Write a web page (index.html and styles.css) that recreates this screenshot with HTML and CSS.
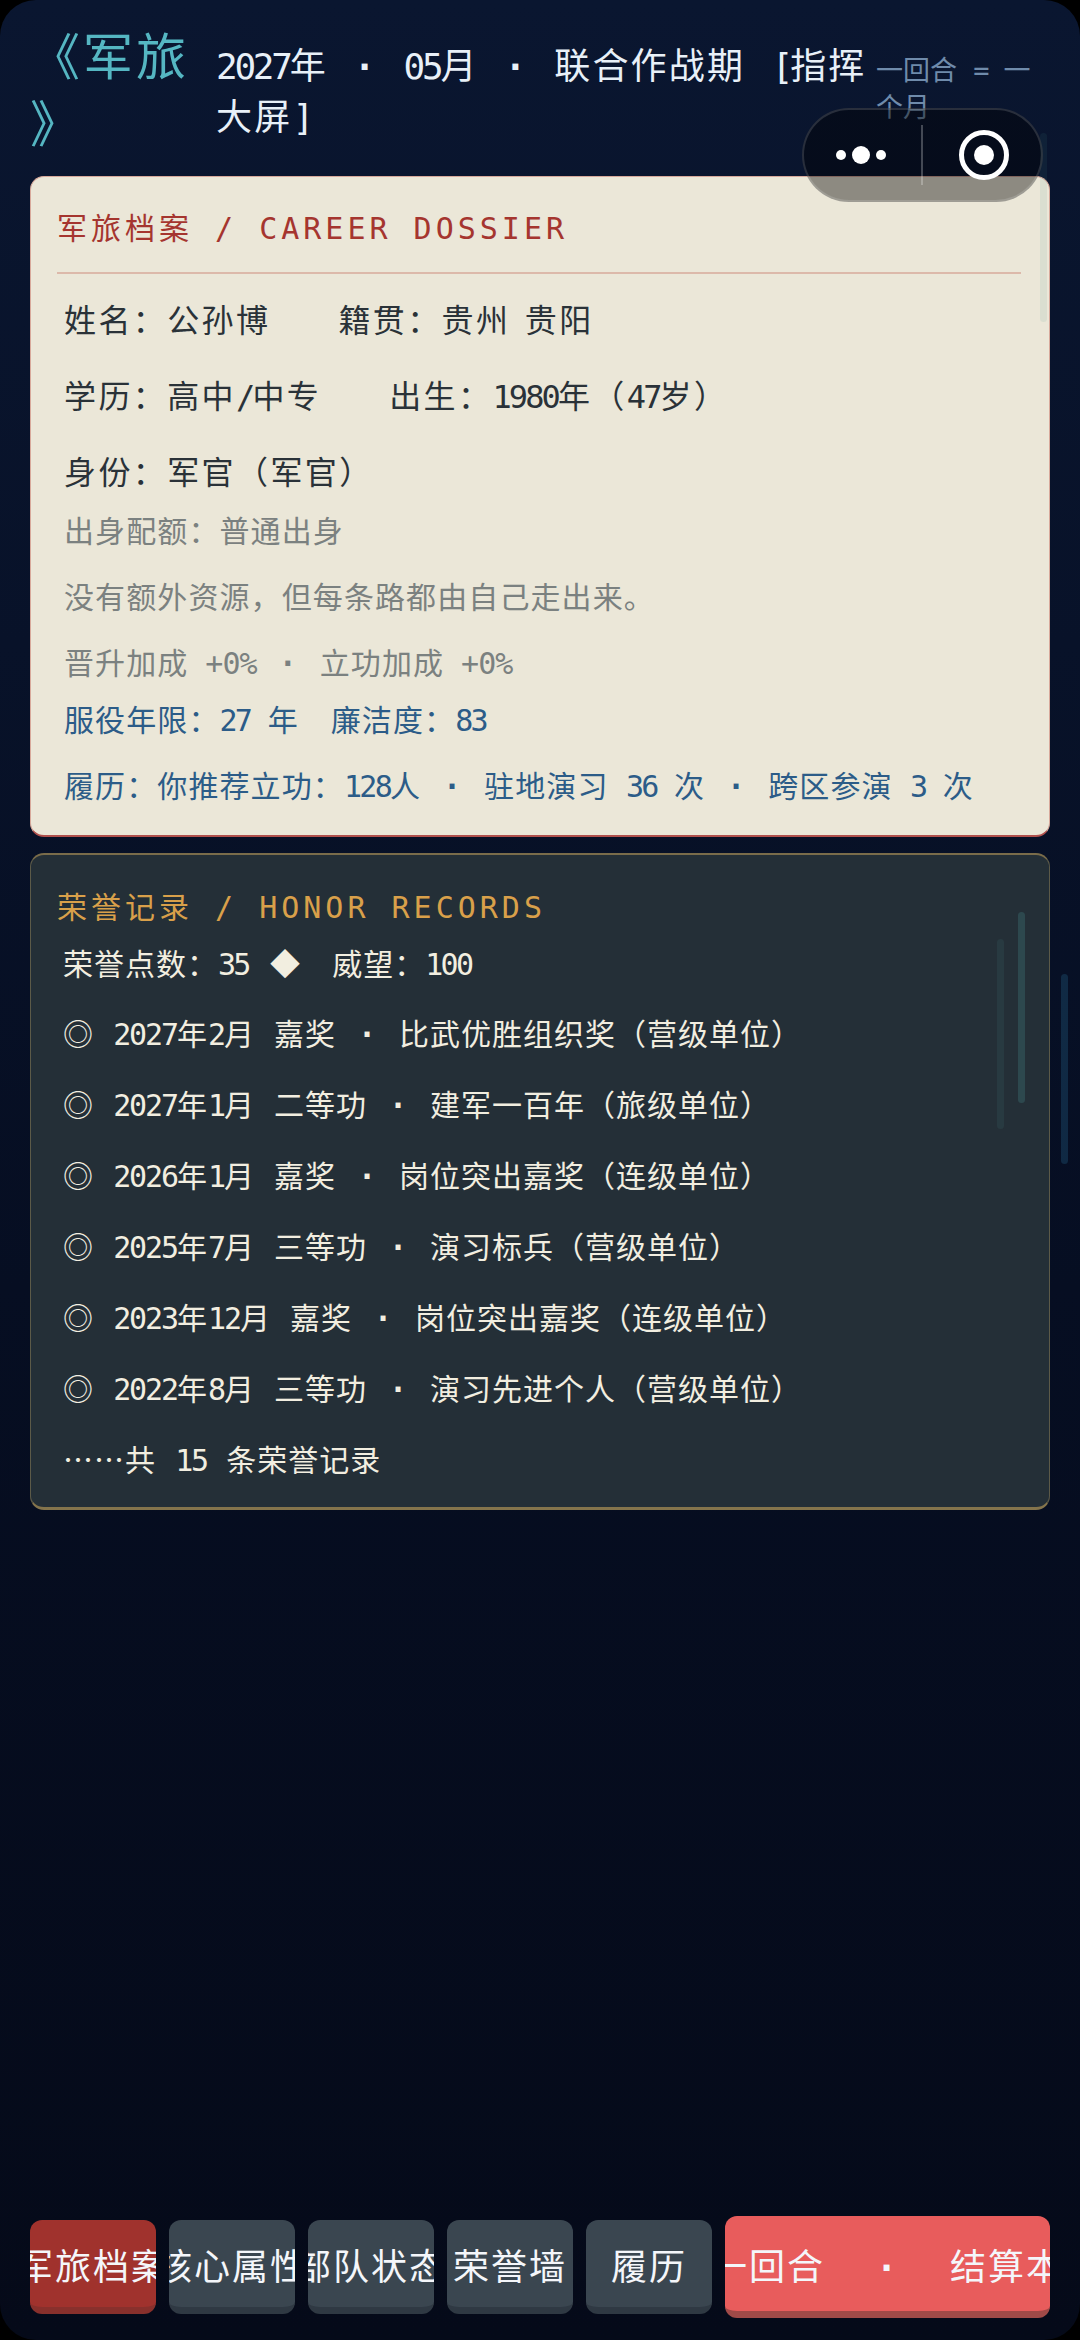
FILE: index.html
```html
<!DOCTYPE html>
<html lang="zh-CN">
<head>
  <meta charset="UTF-8">
  <title>军旅</title>
  <link rel="stylesheet" href="styles.css">
</head>
<body>
  <div class="page">
    <header class="topbar">
      <div class="game-title">《军旅<br>》</div>
      <div class="game-date"><span class="num">2027</span>年<span class="dot">·</span><span class="num">05</span>月<span class="dot">·</span>联合作战期 <span class="num">[</span>指挥大屏<span class="num">]</span></div>
      <div class="game-hint">一回合 <span class="num">=</span> 一个月</div>
    </header>

    <section class="card card-paper">
      <h2 class="card-title title-red">军旅档案 / CAREER DOSSIER</h2>
      <div class="paper-body">
        <div class="info-group">
          <div class="info-row"><span>姓名：公孙博</span><span>籍贯：贵州 贵阳</span></div>
          <div class="info-row"><span>学历：高中<span class="num">/</span>中专</span><span>出生：<span class="num">1980</span>年（<span class="num">47</span>岁）</span></div>
          <div class="info-row"><span>身份：军官（军官）</span></div>
        </div>
        <div class="note-group">
          <div>出身配额：普通出身</div>
          <div>没有额外资源，但每条路都由自己走出来。</div>
          <div>晋升加成 <span class="num">+0%</span><span class="dot">·</span>立功加成 <span class="num">+0%</span></div>
        </div>
        <div class="blue-group">
          <div class="blue-row"><span>服役年限：<span class="num">27</span> 年</span><span>廉洁度：<span class="num">83</span></span></div>
          <div>履历：你推荐立功：<span class="num">128</span>人<span class="dot">·</span>驻地演习 <span class="num">36</span> 次<span class="dot">·</span>跨区参演 <span class="num">3</span> 次</div>
        </div>
      </div>
    </section>

    <section class="card card-dark">
      <h2 class="card-title title-gold">荣誉记录 / HONOR RECORDS</h2>
      <div class="honor-stats">荣誉点数：<span class="num">35</span> ◆ <span class="stat-gap">威望：<span class="num">100</span></span></div>
      <ul class="honor-list">
        <li>◎ <span class="num">2027</span>年<span class="num">2</span>月 嘉奖<span class="dot">·</span>比武优胜组织奖（营级单位）</li>
        <li>◎ <span class="num">2027</span>年<span class="num">1</span>月 二等功<span class="dot">·</span>建军一百年（旅级单位）</li>
        <li>◎ <span class="num">2026</span>年<span class="num">1</span>月 嘉奖<span class="dot">·</span>岗位突出嘉奖（连级单位）</li>
        <li>◎ <span class="num">2025</span>年<span class="num">7</span>月 三等功<span class="dot">·</span>演习标兵（营级单位）</li>
        <li>◎ <span class="num">2023</span>年<span class="num">12</span>月 嘉奖<span class="dot">·</span>岗位突出嘉奖（连级单位）</li>
        <li>◎ <span class="num">2022</span>年<span class="num">8</span>月 三等功<span class="dot">·</span>演习先进个人（营级单位）</li>
        <li>……共 <span class="num">15</span> 条荣誉记录</li>
      </ul>
    </section>

    <nav class="tabbar">
      <div class="tab tab-active"><span>军旅档案</span></div>
      <div class="tab"><span>核心属性</span></div>
      <div class="tab"><span>部队状态</span></div>
      <div class="tab"><span>荣誉墙</span></div>
      <div class="tab"><span>履历</span></div>
      <div class="tab tab-next"><span>下一回合<span class="next-dot">·</span>结算本月</span></div>
    </nav>

    <!-- ghost scroll bars left over on the page -->
    <i class="ghost-bar bar-a"></i>
    <i class="ghost-bar bar-b"></i>
    <i class="ghost-bar bar-c"></i>
    <i class="ghost-bar bar-d"></i>

    <!-- mini program capsule -->
    <div class="capsule">
      <svg class="capsule-dots" width="80" height="24" viewBox="0 0 80 24">
        <circle cx="10" cy="12" r="5" fill="#fff"/>
        <circle cx="30" cy="12" r="9" fill="#fff"/>
        <circle cx="50" cy="12" r="5" fill="#fff"/>
      </svg>
      <span class="capsule-line"></span>
      <svg class="capsule-ring" width="52" height="52" viewBox="0 0 52 52">
        <circle cx="26" cy="26" r="22.5" fill="none" stroke="#fff" stroke-width="5"/>
        <circle cx="26" cy="26" r="10" fill="#fff"/>
      </svg>
    </div>
  </div>
</body>
</html>
```

FILE: styles.css
```css
* {
  box-sizing: border-box;
}

body {
  margin: 0;
  background: #000;
  font-family: "Noto Sans CJK SC", sans-serif;
}

.page {
  position: relative;
  display: flex;
  flex-direction: column;
  width: 1080px;
  height: 2340px;
  padding: 0 30px 22px;
  border-radius: 36px;
  overflow: hidden;
  background: linear-gradient(180deg, #0a1630 0%, #060e22 55%, #050a19 100%);
  word-spacing: 0.3em;
}

/* latin and digits are narrow and tight in this ui */
.num {
  font-family: "DejaVu Sans Mono", monospace;
  line-height: 1;
  letter-spacing: -0.09em;
}

.dot {
  display: inline-block;
  width: 2.1em;
  text-align: center;
  font-family: "DejaVu Sans Mono", monospace;
  font-weight: bold;
  line-height: 1;
}

/* top bar */
.topbar {
  display: flex;
  align-items: center;
  gap: 16px;
  height: 176px;
  padding-bottom: 2px;
}

.game-title {
  flex: 0 0 170px;
  font-size: 50px;
  line-height: 67px;
  letter-spacing: 3px;
  color: #55b6c2;
}

.game-date {
  flex: 0 0 662px;
  height: 106px;
  padding-top: 4px;
  font-size: 36px;
  line-height: 51px;
  letter-spacing: 2.2px;
  word-spacing: 0.45em;
  color: #e8f0f8;
}

.game-hint {
  flex: 0 0 165px;
  margin-left: -18px;
  font-size: 27px;
  line-height: 37px;
  word-spacing: 0.38em;
  color: #6f8bab;
}

/* cards */
.card {
  border-radius: 14px;
  margin-bottom: 16px;
}

.card-paper {
  height: 661px;
  padding: 32px 28px 0;
  background: #ebe7d8;
  border: 1px solid #d8a99b;
  border-bottom: 2px solid #b0504c;
}

.card-dark {
  height: 657px;
  padding: 33px 28px 0;
  background: #242f37;
  border: 1px solid #5c5a48;
  border-top: 2px solid #7a6c4a;
  border-bottom: 3px solid #84744c;
}

.card-title {
  margin: 0 0 0 -2px;
  font-size: 30px;
  font-weight: normal;
  line-height: 40px;
  letter-spacing: 4px;
  word-spacing: 0;
  font-family: "DejaVu Sans Mono", "Noto Sans CJK SC", monospace;
}

.title-red {
  padding-bottom: 23px;
  border-bottom: 2px solid #dcb9aa;
  color: #a5352f;
}

.title-gold {
  color: #d9a04a;
}

.paper-body {
  display: flex;
  flex-direction: column;
  gap: 20px;
  padding: 24px 0 0 5px;
}

.info-group {
  display: flex;
  flex-direction: column;
  gap: 36px;
  font-size: 32px;
  line-height: 40px;
  letter-spacing: 2.4px;
  color: #2a3238;
}

.info-row,
.blue-row {
  display: flex;
  gap: 68px;
  height: 40px;
}

.blue-row {
  gap: 32px;
  height: 36px;
}

.note-group {
  display: flex;
  flex-direction: column;
  gap: 30px;
  margin-top: 1px;
  font-size: 30px;
  line-height: 36px;
  letter-spacing: 1.1px;
  word-spacing: 0.3em;
  color: #7b8180;
}

.note-group .num {
  letter-spacing: -0.03em;
}

.note-group div,
.blue-group div {
  height: 36px;
}

.blue-group {
  display: flex;
  flex-direction: column;
  gap: 30px;
  margin-top: 1px;
  font-size: 30px;
  line-height: 36px;
  letter-spacing: 1.1px;
  word-spacing: 0.32em;
  color: #2c5c88;
}

.honor-stats {
  height: 36px;
  margin-top: 16px;
  padding-left: 4px;
  font-size: 30px;
  line-height: 36px;
  letter-spacing: 1px;
  word-spacing: 0.45em;
  color: #f2eee0;
}

.stat-gap {
  margin-left: 10px;
}

.honor-list {
  list-style: none;
  display: flex;
  flex-direction: column;
  gap: 35px;
  margin: 34px 0 0;
  padding: 0 0 0 4px;
  font-size: 30px;
  line-height: 36px;
  letter-spacing: 1px;
  word-spacing: 0.38em;
  color: #f2eee0;
}

.honor-list .num {
  letter-spacing: -0.07em;
}

.honor-list li {
  height: 36px;
}

/* bottom tabs */
.tabbar {
  display: flex;
  align-items: center;
  gap: 13px;
  margin-top: auto;
  word-spacing: 0;
}

.tab {
  display: flex;
  flex: 0 0 126px;
  align-items: center;
  justify-content: center;
  height: 94px;
  overflow: hidden;
  border-radius: 12px;
  background: #3a4650;
  border-bottom: 7px solid #2f3943;
  color: #f4f6fa;
  font-size: 36px;
  letter-spacing: 2px;
  white-space: nowrap;
}

.tab span {
  flex-shrink: 0;
}

.tab-active {
  background: #a0322d;
  border-bottom-color: #88302c;
}

.tab-next {
  flex: 1;
  height: 102px;
  background: #e85c5c;
  border-bottom-color: #a04a48;
}

.next-dot {
  display: inline-block;
  width: 125px;
  text-align: center;
  font-family: "DejaVu Sans Mono", monospace;
  font-weight: bold;
}

/* things lying over the page */
.ghost-bar {
  position: absolute;
  width: 7px;
  border-radius: 4px;
}

.bar-a {
  left: 997px;
  top: 939px;
  height: 190px;
  background: rgba(70, 130, 130, 0.14);
}

.bar-b {
  left: 1018px;
  top: 912px;
  height: 191px;
  background: rgba(70, 140, 140, 0.28);
}

.bar-c {
  left: 1061px;
  top: 974px;
  height: 190px;
  background: rgba(40, 110, 150, 0.28);
}

.bar-d {
  left: 1040px;
  top: 133px;
  height: 189px;
  background: rgba(70, 150, 140, 0.1);
}

.capsule {
  position: absolute;
  left: 802px;
  top: 108px;
  display: flex;
  align-items: center;
  width: 241px;
  height: 94px;
  border: 2px solid rgba(255, 255, 255, 0.14);
  border-radius: 47px;
  background: rgba(0, 0, 0, 0.4);
}

.capsule-dots {
  flex: none;
  margin-left: 27px;
}

.capsule-line {
  width: 2px;
  height: 60px;
  margin: 0 35px 0 10px;
  background: rgba(255, 255, 255, 0.25);
}

.capsule-ring {
  flex: none;
}
```
